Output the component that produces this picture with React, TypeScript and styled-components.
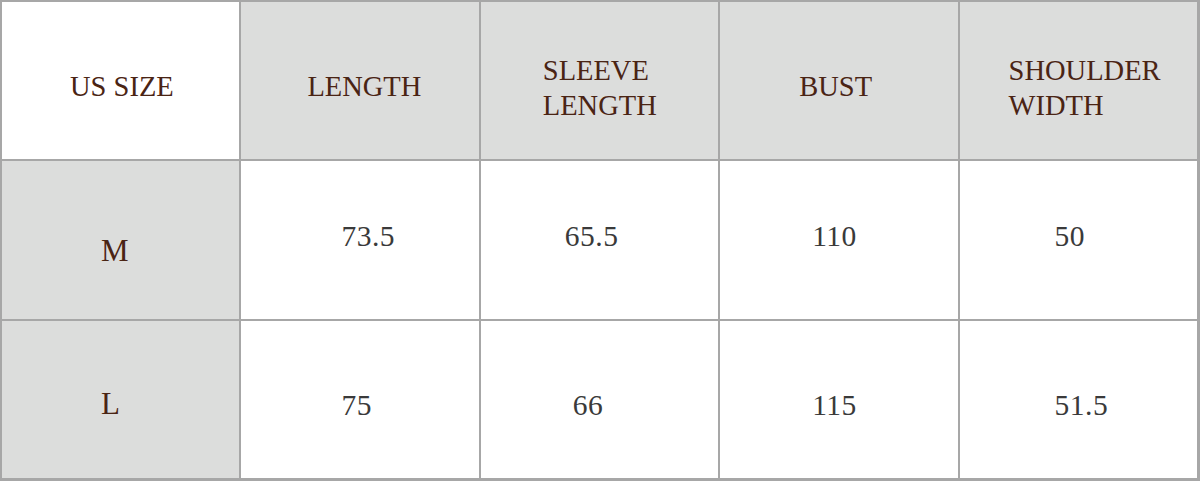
import { Fragment } from "react";
import styled, { createGlobalStyle } from "styled-components";

const Global = createGlobalStyle`
  html, body {
    margin: 0;
    padding: 0;
    background: #ffffff;
  }
  body {
    font-family: "Liberation Serif", "Times New Roman", serif;
  }
`;

const Table = styled.div`
  width: 1200px;
  height: 481px;
  box-sizing: border-box;
  display: grid;
  grid-template-columns: repeat(5, 1fr);
  grid-template-rows: 157px 158px 157px;
  gap: 2px;
  padding: 2px 3px 3px 2px;
  background: #a7a7a7;
`;

const Cell = styled.div<{ $shade?: boolean; $x: number; $y: number }>`
  background: ${p => (p.$shade ? "#dcdddc" : "#ffffff")};
  display: flex;
  align-items: center;
  justify-content: flex-start;
  padding-left: ${p => p.$x}px;
  padding-top: ${p => (p.$y > 0 ? p.$y * 2 : 0)}px;
  padding-bottom: ${p => (p.$y < 0 ? -p.$y * 2 : 0)}px;
  box-sizing: border-box;
`;

const HeadText = styled.div`
  color: #4a2414;
  font-size: 28.5px;
  line-height: 35px;
  text-transform: uppercase;
`;

const SizeText = styled.div`
  color: #4a2414;
  font-size: 31px;
  line-height: 1;
`;

const ValueText = styled.div`
  color: #3a3a3a;
  font-size: 29.5px;
  line-height: 1;
  letter-spacing: 0.5px;
`;

const headers = [
  { lines: ["US SIZE"], x: 68, shaded: false },
  { lines: ["LENGTH"], x: 66, shaded: true },
  { lines: ["SLEEVE", "LENGTH"], x: 62, shaded: true },
  { lines: ["BUST"], x: 79, shaded: true },
  { lines: ["SHOULDER", "WIDTH"], x: 49, shaded: true },
];

const rows = [
  {
    size: "M",
    sizeY: 10,
    valueY: -3,
    values: [
      { v: "73.5", x: 100 },
      { v: "65.5", x: 84 },
      { v: "110", x: 92 },
      { v: "50", x: 95 },
    ],
  },
  {
    size: "L",
    sizeY: 4,
    valueY: 6,
    values: [
      { v: "75", x: 100 },
      { v: "66", x: 92 },
      { v: "115", x: 92 },
      { v: "51.5", x: 95 },
    ],
  },
];

export default function App() {
  return (
    <>
      <Global />
      <Table>
        {headers.map(h => (
          <Cell key={h.lines.join(" ")} $shade={h.shaded} $x={h.x} $y={h.lines.length > 1 ? 7 : 6}>
            <HeadText>
              {h.lines.map(l => (
                <div key={l}>{l}</div>
              ))}
            </HeadText>
          </Cell>
        ))}
        {rows.map(r => (
          <Fragment key={r.size}>
            <Cell $shade $x={99} $y={r.sizeY}>
              <SizeText>{r.size}</SizeText>
            </Cell>
            {r.values.map((c, i) => (
              <Cell key={i} $x={c.x} $y={r.valueY}>
                <ValueText>{c.v}</ValueText>
              </Cell>
            ))}
          </Fragment>
        ))}
      </Table>
    </>
  );
}
